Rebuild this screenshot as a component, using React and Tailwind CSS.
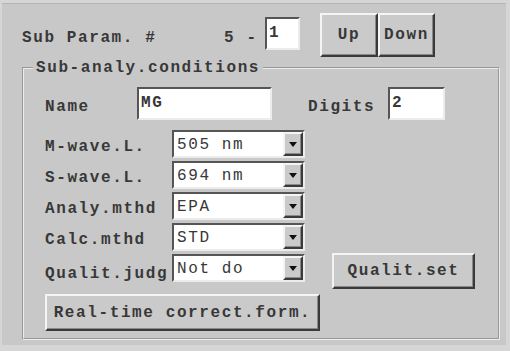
const mono = "font-['Liberation_Mono',monospace] tracking-[1.6px] text-[16px] leading-[18px] text-[#383838]";

const raised =
  'border-2 border-t-[#f4f4f4] border-l-[#f4f4f4] border-b-[#3a3a3a] border-r-[#3a3a3a] shadow-[inset_-1px_-1px_#8a8a8a] bg-[#cacaca]';
const sunken =
  'border-2 border-t-[#555] border-l-[#555] border-b-[#ececec] border-r-[#ececec] bg-white';

const Btn = ({ children, className = '' }) => (
  <button className={`${raised} ${mono} font-bold flex items-center justify-center ${className}`}>
    {children}
  </button>
);

const Field = ({ value, className = '' }) => (
  <div className={`${sunken} ${mono} font-bold pl-[2px] pt-[5px] ${className}`}>{value}</div>
);

const Combo = ({ value }) => (
  <div className={`${sunken} w-[133px] h-[28px] flex items-center`}>
    <span className={`${mono} flex-1 pl-[3px] pt-[1px] whitespace-nowrap`}>{value}</span>
    <div className={`${raised} w-[20px] h-full flex items-center justify-center`}>
      <svg width="8" height="5" viewBox="0 0 8 5">
        <path d="M0 0h8L4 5z" fill="#111" />
      </svg>
    </div>
  </div>
);

const Label = ({ children, className = '' }) => (
  <span className={`${mono} font-bold pt-[6px] whitespace-nowrap ${className}`}>{children}</span>
);

export default function App() {
  const rows = [
    ['M-wave.L.', '505 nm'],
    ['S-wave.L.', '694 nm'],
    ['Analy.mthd', 'EPA'],
    ['Calc.mthd', 'STD'],
  ];

  return (
    <div className="w-[510px] h-[351px] bg-[#c8c8c8] border-t-[3px] border-l-[2px] border-b-[6px] border-r-[4px] border-[#d6d6d6] overflow-hidden">
      <div className="pt-[10px] pl-[20px] border-t border-[#b4b4b4]">
        {/* top row */}
        <div className="flex items-center h-[44px] -mt-[1px]">
          <Label className="w-[202px] pt-[2px]">Sub Param. #</Label>
          <Label className="w-[41px] pt-[2px]">5 -</Label>
          <Field value="1" className="w-[35px] h-[33px] -mt-[3px]" />
          <Btn className="ml-[20px] w-[58px] h-[44px]">Up</Btn>
          <Btn className="w-[57px] h-[44px]">Down</Btn>
        </div>

        <fieldset className="mt-[2px] w-[478px] h-[281px] border-2 [border-style:groove] border-[#ececec]">
          <legend className={`${mono} font-bold ml-[9px] px-[3px]`}>Sub-analy.conditions</legend>
          <div className="pl-[21px] pt-[10px] flex flex-col">
            <div className="flex items-center h-[33px]">
              <Label className="w-[92px]">Name</Label>
              <Field value="MG" className="w-[135px] h-[33px]" />
              <Label className="ml-[36px] w-[80px]">Digits</Label>
              <Field value="2" className="w-[57px] h-[33px]" />
            </div>

            <div className="mt-[10px] flex flex-col gap-[3px]">
              {rows.map(([label, value]) => (
                <div key={label} className="flex items-center h-[28px]">
                  <Label className="w-[127px]">{label}</Label>
                  <Combo value={value} />
                </div>
              ))}
            </div>

            <div className="mt-[2px] flex items-start">
              <Label className="w-[127px] pt-[12px]">Qualit.judg</Label>
              <div className="mt-[1px]">
                <Combo value="Not do" />
              </div>
              <Btn className="ml-[27px] w-[143px] h-[36px]">Qualit.set</Btn>
            </div>

            <Btn className="mt-[5px] w-[275px] h-[37px]">Real-time correct.form.</Btn>
          </div>
        </fieldset>
      </div>
    </div>
  );
}
